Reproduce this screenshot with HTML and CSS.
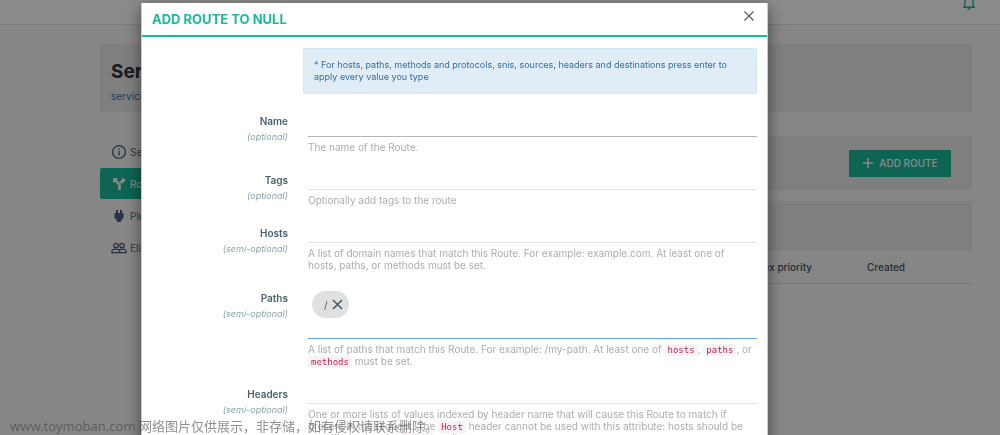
FILE: index.html
```html
<!DOCTYPE html>
<html lang="en">
<head>
<meta charset="utf-8">
<title>Add route</title>
<link rel="stylesheet" href="styles.css">
</head>
<body>
<div class="page">
  <header class="topbar">
    <button class="bell" type="button" aria-label="Notifications">
      <svg width="14" height="18" viewBox="0 0 14 18" fill="none" stroke="currentColor" stroke-width="1.4"><path d="M1 15.300h12M2.400 15c.8-1.500.6-3 .6-7 0-3.500 1.600-5 4-5s4 1.500 4 5c0 4-.2 5.500.6 7"/><path d="M5.500 17h3"/></svg>
    </button>
  </header>
  <div class="content">
    <section class="panel heading">
      <h1>Service</h1>
      <a href="#">services / edit</a>
    </section>
    <div class="columns">
      <nav class="side">
        <a href="#"><svg width="16" height="16" viewBox="0 0 16 16" fill="none" stroke="currentColor" stroke-width="1.4"><circle cx="8" cy="8" r="6.400"/><path d="M8 7v4.500M8 4.300v1.500"/></svg>Service Details</a>
        <a href="#" class="active"><svg width="16" height="16" viewBox="0 0 16 16" fill="none" stroke="currentColor" stroke-width="2.600"><path d="M8.500 14V9.500C8.500 7.500 6 6 4 4M9.500 7l3-3"/><path d="M2 7V2h5zM10 2.500h4v4z" fill="currentColor" stroke="none"/></svg>Routes</a>
        <a href="#"><svg width="16" height="16" viewBox="0 0 16 16" fill="currentColor"><path d="M5 2h2v3h2V2h2v3h1.500v5L10 12.500V14H6v-1.500L3.500 10V5H5z"/></svg>Plugins</a>
        <a href="#"><svg width="16" height="16" viewBox="0 0 16 16" fill="none" stroke="currentColor" stroke-width="1.300"><circle cx="5" cy="5.500" r="2.200"/><circle cx="11" cy="5.500" r="2.200"/><path d="M1 12.600v-1.500c0-1.200 2-1.900 4-1.900s3.600.7 3.600 1.900v1.500zM8.600 12.600H15v-1.500c0-1.200-2-1.900-4-1.900-1 0-2 .2-2.700.6"/></svg>Eligible consumers</a>
      </nav>
      <main class="main">
        <div class="panel toolbar">
          <button class="add" type="button"><svg width="12" height="12" viewBox="0 0 12 12" stroke="currentColor" stroke-width="1.500"><path d="M6 1v10M1 6h10"/></svg>ADD ROUTE</button>
        </div>
        <div class="panel search"></div>
        <table class="routes">
          <thead><tr><th class="priority">Regex priority</th><th class="created">Created</th></tr></thead>
        </table>
      </main>
    </div>
  </div>
</div>

<div class="overlay">
  <div class="modal" role="dialog" aria-labelledby="title">
    <div class="modal-head">
      <h2 id="title">ADD ROUTE TO NULL</h2>
      <button class="close" type="button" aria-label="Close"><svg width="12" height="12" viewBox="0 0 12 12" stroke="currentColor" stroke-width="1.400"><path d="M1.500 1.500l9 9M10.500 1.500l-9 9"/></svg></button>
    </div>
    <form class="form">
      <p class="alert">* For hosts, paths, methods and protocols, snis, sources, headers and destinations press enter to apply every value you type</p>
      <div class="row">
        <label for="name">Name<em>(optional)</em></label>
        <div><input id="name" class="field name" type="text"><p class="help">The name of the Route.</p></div>
      </div>
      <div class="row">
        <label for="tags">Tags<em>(optional)</em></label>
        <div><input id="tags" class="field" type="text"><p class="help">Optionally add tags to the route</p></div>
      </div>
      <div class="row">
        <label for="hosts">Hosts<em>(semi-optional)</em></label>
        <div><input id="hosts" class="field" type="text"><p class="help">A list of domain names that match this Route. For example: example.com. At least one of hosts, paths, or methods must be set.</p></div>
      </div>
      <div class="row">
        <label for="paths">Paths<em>(semi-optional)</em></label>
        <div>
          <div class="chips">
            <span class="chip">/<button type="button" aria-label="Remove path"><svg width="11" height="11" viewBox="0 0 11 11" stroke="currentColor" stroke-width="1.600"><path d="M1 1l9 9M10 1l-9 9"/></svg></button></span>
            <input id="paths" type="text">
          </div>
          <p class="help">A list of paths that match this Route. For example: /my-path. At least one of <code>hosts</code>, <code>paths</code>, or <code>methods</code> must be set.</p>
        </div>
      </div>
      <div class="row">
        <label for="headers">Headers<em>(semi-optional)</em></label>
        <div><input id="headers" class="field" type="text"><p class="help">One or more lists of values indexed by header name that will cause this Route to match if present in the request. The <code>Host</code> header cannot be used with this attribute: hosts should be specified using the <code>hosts</code> attribute.</p></div>
      </div>
    </form>
  </div>
</div>
<div class="watermark">www.toymoban.com 网络图片仅供展示，非存储，如有侵权请联系删除。</div>
</body>
</html>
```
FILE: styles.css
```css
* { box-sizing: border-box; }

body {
  margin: 0;
  height: 100vh;
  overflow: hidden;
  background: #f8f8f8;
  color: #34495e;
  font: 10px/12px Inter, "Noto Sans", sans-serif;
}

h1, h2, p { margin: 0; }
a { color: #337ab7; text-decoration: none; }
button { border: 0; padding: 0; background: none; font: inherit; }
svg { display: block; flex: none; }

.topbar {
  display: flex;
  justify-content: flex-end;
  height: 25px;
  padding: 0 24px;
  overflow: hidden;
  background: #fff;
  border-bottom: 1px solid #e7e7e7;
}
.bell { align-self: flex-start; margin-top: -8px; color: #1abb9c; }

.content { padding: 19px 28px 0 100px; }
.panel { background: #ebebeb; }
.heading { height: 68px; padding: 16px 11px; }
.heading h1 { color: #333; font-size: 19px; line-height: 24px; font-weight: 700; }
.heading a { display: block; margin-top: 6px; }

.columns { display: flex; gap: 20px; padding-top: 24px; }
.side { width: 180px; display: grid; gap: 1px; align-content: start; }
.side a {
  display: flex;
  align-items: center;
  gap: 3px;
  height: 31px;
  padding: 0 11px;
  border-radius: 2px;
  color: #5d6d7e;
}
.side svg { color: #4a6080; }
.side .active, .side .active svg { color: #fff; }
.side .active { background: #1abb9c; }

.main { flex: 1; }
.toolbar {
  display: flex;
  justify-content: flex-end;
  align-items: center;
  height: 54px;
  padding-right: 21px;
}
.add {
  display: flex;
  align-items: center;
  justify-content: center;
  gap: 5px;
  width: 102px;
  height: 27px;
  background: #1abb9c;
  color: #fff;
  font-weight: 500;
}
.search { height: 48px; margin-top: 11px; }
.routes { width: 100%; border-collapse: collapse; border-top: 1px solid #ddd; border-bottom: 1px solid #ddd; }
.routes th { height: 34px; padding: 0; font-weight: 500; text-align: right; color: #3f5468; }
.routes .created { width: 160px; padding-left: 55px; text-align: left; }

.overlay { position: fixed; inset: 0; overflow: hidden; background: rgba(0, 0, 0, .46); }
.modal {
  margin: 3px 232px 0 141px;
  background: #fff;
  border: 1px solid rgba(0, 0, 0, .2);
  border-top: 0;
  box-shadow: 0 5px 15px rgba(0, 0, 0, .5);
}
.modal-head {
  display: flex;
  justify-content: space-between;
  align-items: center;
  height: 34px;
  padding: 0 12px 0 10px;
  border-bottom: 2px solid #1abb9c;
}
.modal-head h2 { color: #1abb9c; font-size: 13px; line-height: 16px; font-weight: 700; }
.close { color: #666; padding-bottom: 6px; }

.form { display: grid; gap: 20px; padding: 11px 10px 20px; }
.alert {
  margin-left: 151px;
  padding: 10px;
  border: 1px solid #cfe6f3;
  border-radius: 2px;
  background: #e0edf7;
  color: #31709c;
  font-size: 9px;
  line-height: 12px;
  min-height: 46px;
}
.row { display: grid; grid-template-columns: 136px 1fr; gap: 20px; }
.row label { text-align: right; line-height: 15px; font-weight: 600; color: #4a5f6b; }
.row em { display: block; font-size: 9px; font-weight: 400; color: #8aa4af; }
.field {
  display: block;
  width: 100%;
  height: 17px;
  padding: 0;
  border: 0;
  border-bottom: 1px solid #e3e3e3;
  background: none;
  font: inherit;
}
.name { height: 23px; border-color: #b4b4b4; }
.help { margin-top: 4px; padding-right: 5px; color: #adadad; }
.chips { display: flex; align-items: flex-start; height: 48px; padding-left: 4px; border-bottom: 1px solid #5ca5e6; }
.chips input { flex: 1; min-width: 0; height: 27px; border: 0; outline: 0; background: none; font: inherit; }
.chip {
  display: flex;
  align-items: center;
  gap: 4px;
  height: 27px;
  padding: 0 6px 0 12px;
  border-radius: 14px;
  background: #e0e0e0;
  color: #555;
}
.chip button { color: #455a64; }
code {
  padding: 1px 3px;
  border-radius: 2px;
  background: #f9f2f4;
  color: #c7254e;
  font: 9px/10px "DejaVu Sans Mono", monospace;
}

.watermark {
  position: fixed;
  left: 10px;
  bottom: 0;
  color: rgba(70, 70, 70, .6);
  font: 13px/18px "Noto Sans", "Noto Sans CJK SC", sans-serif;
  white-space: nowrap;
}
```
